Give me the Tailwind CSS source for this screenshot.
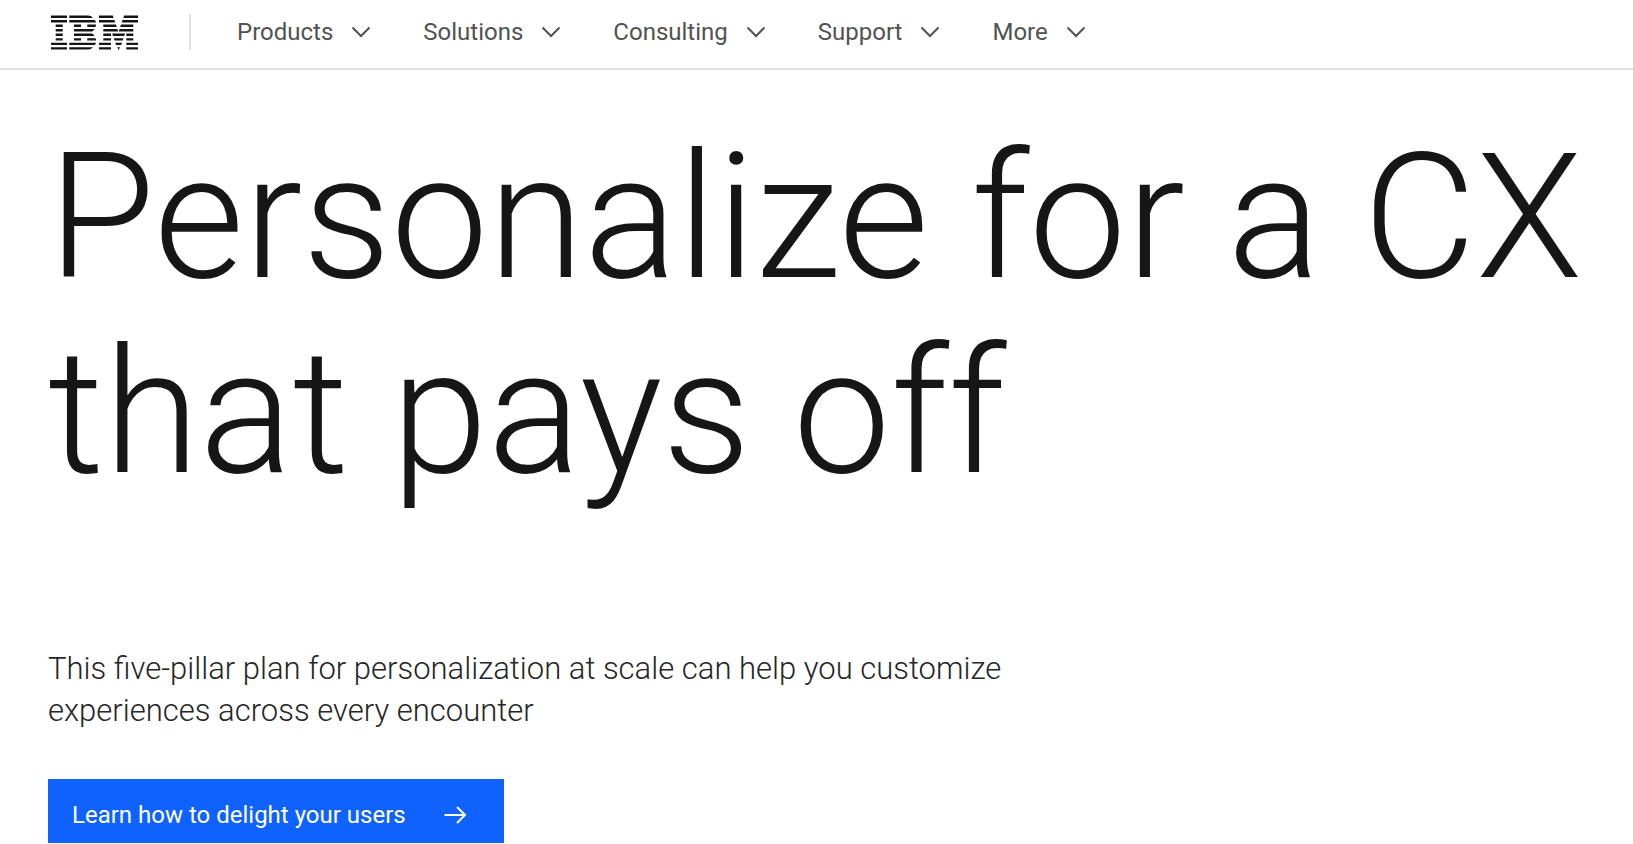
<!DOCTYPE html>
<html lang="en">
  <head>
    <meta charset="UTF-8" />
    <meta name="viewport" content="width=device-width, initial-scale=1.0" />
    <!-- Installing Tailwind -->
    <script src="https://cdn.jsdelivr.net/npm/@tailwindcss/browser@4"></script>
    <title>Personalize for a CX that pays off | IBM</title>
  </head>

  <body class="bg-white font-['Roboto','Liberation_Sans',sans-serif] text-[#161616]">
    <!-- Header with logo and main navigation -->
    <header class="flex h-[70px] items-center border-b-2 border-[#e0e0e0] px-12 pb-1">
      <a href="#" aria-label="IBM" class="ml-[3px] shrink-0">
        <svg class="h-[35px] w-[87px]" viewBox="0 0 87 35" fill="currentColor" aria-hidden="true">
          <!-- I -->
          <path d="M0 .5h16v2.4H0zM0 5h16v2.4H0zM4.7 9.6h7V12h-7zM4.7 14.1h7v2.4h-7zM4.7 18.6h7V21h-7zM4.7 23.2h7v2.4h-7zM0 27.7h16v2.4H0zM0 32.2h16v2.4H0z" />
          <!-- B -->
          <path d="M18.3.5h19.2q3 .4 4.5 2.4H18.3zM18.3 5h25.4q1 1 1.3 2.4H18.3zM23 9.6h7V12h-7zM36.3 9.6H45q0 1.3-.5 2.4h-8.2zM23 14.1h20.5q-1 1.7-2.5 2.4H23zM23 18.6h18q1.6.9 2.5 2.4H23zM23 23.2h7v2.4h-7zM36.3 23.2h8.3q.5 1.2.4 2.4h-8.7zM18.3 27.7H45q-.3 1.4-1.2 2.4H18.3zM18.3 32.2H42q-2 2.2-4.5 2.4H18.3z" />
          <!-- M -->
          <path d="M48 .5h13.8l.8 2.4H48zM73.1.5H87v2.4H72.3zM48 5h15.4l.8 2.4H48zM71.5 5H87v2.4H70.7zM52.3 9.6h12.6l.8 2.4H52.3zM70 9.6h12.3V12H69.2zM52.3 14.1h14.1l.8 2.4H52.3zM68.5 14.1h13.8v2.4H67.7zM52.3 18.6H60V21h-7.7zM61.2 18.6H74l-.8 2.4H62zM75.3 18.6h7V21h-7zM52.3 23.2H60v2.4h-7.7zM62.8 23.2h9.7l-.8 2.4h-8.1zM75.3 23.2h7v2.4h-7zM48 27.7h12v2.4H48zM64.3 27.7H71l-.8 2.4h-5.1zM75.3 27.7H87v2.4H75.3zM48 32.2h12v2.4H48zM66.2 32.2H69L67.6 35zM75.3 32.2H87v2.4H75.3z" />
        </svg>
      </a>
      <div class="ml-[51px] h-9 w-0.5 bg-[#e0e0e0]"></div>
      <nav class="ml-[46px] flex items-center gap-[50px] text-2xl text-[#525252]">
        <button type="button" class="flex items-center gap-4">
          Products
          <svg class="size-6" viewBox="0 0 24 24" fill="none" stroke="currentColor" stroke-width="2" aria-hidden="true"><path d="M3.5 7.5L12 16l8.5-8.5" /></svg>
        </button>
        <button type="button" class="flex items-center gap-4">
          Solutions
          <svg class="size-6" viewBox="0 0 24 24" fill="none" stroke="currentColor" stroke-width="2" aria-hidden="true"><path d="M3.5 7.5L12 16l8.5-8.5" /></svg>
        </button>
        <button type="button" class="flex items-center gap-4">
          Consulting
          <svg class="size-6" viewBox="0 0 24 24" fill="none" stroke="currentColor" stroke-width="2" aria-hidden="true"><path d="M3.5 7.5L12 16l8.5-8.5" /></svg>
        </button>
        <button type="button" class="flex items-center gap-4">
          Support
          <svg class="size-6" viewBox="0 0 24 24" fill="none" stroke="currentColor" stroke-width="2" aria-hidden="true"><path d="M3.5 7.5L12 16l8.5-8.5" /></svg>
        </button>
        <button type="button" class="flex items-center gap-4">
          More
          <svg class="size-6" viewBox="0 0 24 24" fill="none" stroke="currentColor" stroke-width="2" aria-hidden="true"><path d="M3.5 7.5L12 16l8.5-8.5" /></svg>
        </button>
      </nav>
    </header>

    <!-- Hero text and call to action -->
    <main class="px-12 pt-[50px]">
      <h1 class="text-[174px] leading-[195px] font-light">Personalize for a CX<br>that pays off</h1>
      <p class="mt-[138px] max-w-[1000px] text-[31px] leading-[42px] font-light text-[#262626]">This five-pillar plan for personalization at scale can help you customize experiences across every encounter</p>
      <a href="#" class="mt-[47px] flex h-16 w-fit items-center bg-[#0f62fe] pt-2 pr-9 pl-6 text-2xl text-white">
        Learn how to delight your users
        <svg class="ml-[37px] h-6 w-[25px]" viewBox="0 0 25 24" fill="none" stroke="currentColor" stroke-width="2" aria-hidden="true"><path d="M1.5 12H22M14 4l8 8-8 8" /></svg>
      </a>
    </main>
  </body>
</html>
